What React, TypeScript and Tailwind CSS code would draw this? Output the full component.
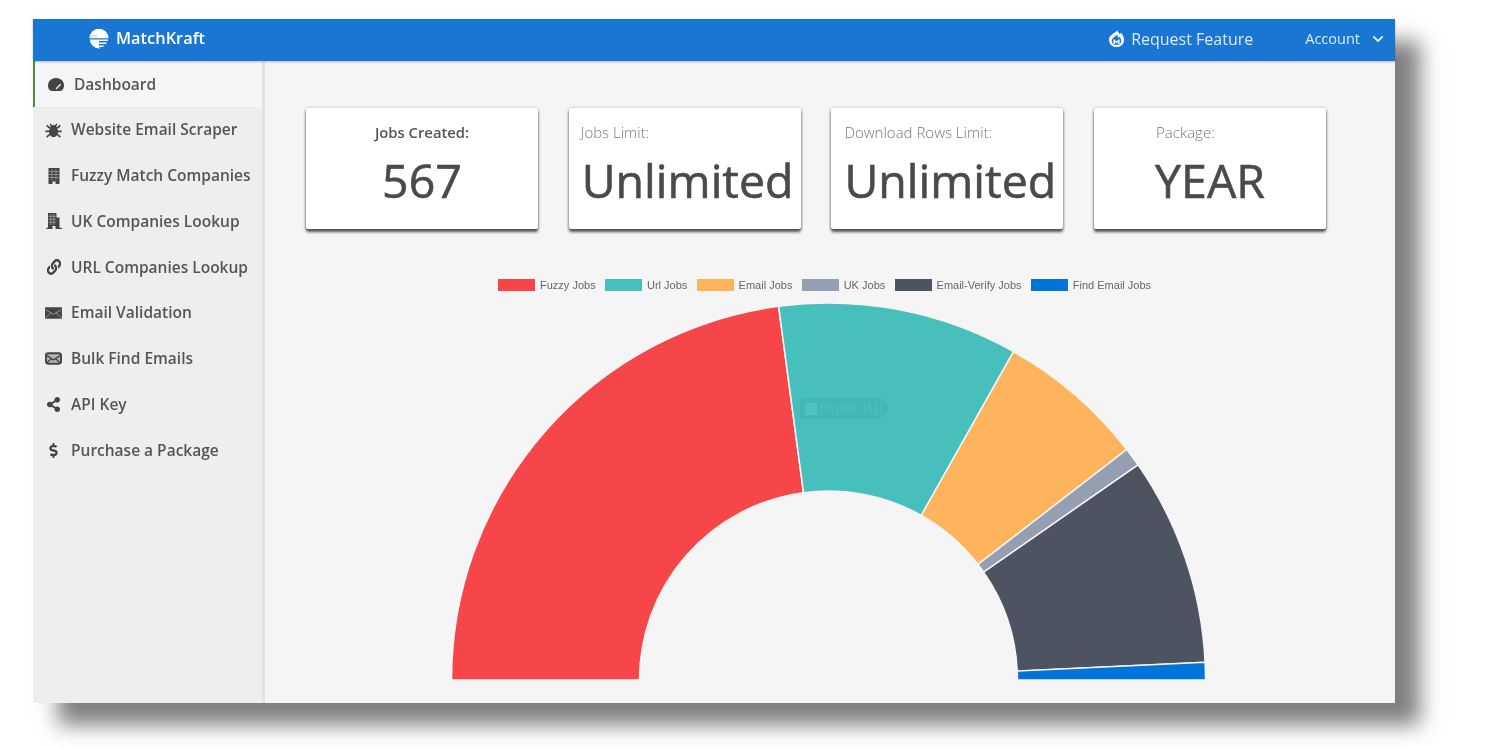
import { FaChevronDown, FaDollarSign, FaLink, FaShareAlt } from "react-icons/fa";

const DashIcon = ({ className }: { className?: string }) => (
  <svg viewBox="0 0 16 13" className={className}>
    <path d="M8 0C3.6 0 0 3.2 0 7.4c0 2.2.9 4 2.3 5.1.4.3.8.5 1.3.5h8.8c.5 0 .9-.2 1.300-.5C14.900 11.400 16 9.600 16 7.400 16 3.200 12.400 0 8 0Z" fill="currentColor" />
    <path d="M8.500 10.500 12.300 6.500" stroke="#eee" strokeWidth="1.400" strokeLinecap="round" />
  </svg>
);

const BugIcon = ({ className }: { className?: string }) => (
  <svg viewBox="0 0 18 16" className={className}>
    <ellipse cx="9" cy="9.500" rx="4.800" ry="6.300" fill="currentColor" />
    <path d="M5.500 1.500 7 4M12.500 1.500 11 4" stroke="currentColor" strokeWidth="1.500" />
    <path d="M5 6 1.800 3M13 6l3.200-3M4.500 9.500H.3M13.500 9.500h4.200M5 12.500 1.800 15.500M13 12.500l3.200 3" stroke="currentColor" strokeWidth="1.800" />
    <path d="M6 4.200h6" stroke="currentColor" strokeWidth="2.500" />
  </svg>
);

const TowerIcon = ({ className }: { className?: string }) => (
  <svg viewBox="0 0 12 16" className={className}>
    <path d="M0.500 0H11.500V16H7.500V13.500H4.500V16H0.500Z" fill="currentColor" />
    <path d="M4 1V12.500M8 1V12.500M1 3.500H11M1 6.500H11M1 9.500H11" stroke="#9a9a9a" strokeWidth="0.800" />
  </svg>
);

const HotelIcon = ({ className }: { className?: string }) => (
  <svg viewBox="0 0 16 16" className={className}>
    <path d="M2 0H10.500V4.500H13.500V14.800H15.800V16H9.500V13H6.500V16H0.200V14.800H2Z" fill="currentColor" />
    <path d="M4.800 1V12M7.800 1V12M2.500 3.300H10M2.500 6.300H10M2.500 9.300H10" stroke="#a5a5a5" strokeWidth="0.800" />
  </svg>
);

const MailIcon = ({ className }: { className?: string }) => (
  <svg viewBox="0 0 18 12" className={className}>
    <rect width="18" height="12" rx="0.800" fill="currentColor" />
    <path d="M0.500 2.500 9 7.300 17.500 2.500M0.500 11 6.500 6M17.500 11 11.500 6" stroke="#aaa" strokeWidth="0.800" fill="none" />
  </svg>
);

const BulkIcon = ({ className }: { className?: string }) => (
  <svg viewBox="0 0 18 13" className={className}>
    <rect x="1" y="1" width="16" height="11" rx="2.500" fill="#b5b5b5" stroke="currentColor" strokeWidth="2" />
    <path d="M2 3.500 9 8 16 3.500M2 11 7 6.500M16 11 11 6.500" stroke="currentColor" strokeWidth="1.400" fill="none" />
  </svg>
);

const FlameIcon = ({ className }: { className?: string }) => (
  <svg viewBox="0 0 16 18" className={className}>
    <path d="M9 0c.2 2 1.600 3.200 2.600 4.600.5-.6.8-1.300.9-2C14.800 4.800 16 7.600 16 10.200 16 14.600 12.600 18 8 18s-8-3.400-8-7.800C0 6.300 3 5 5 3.400 6.600 2.300 8.400 1.600 9 0Z" fill="#fff" />
    <path d="M8.500 5C7.500 6.500 3 8 3 11.500 3 13.500 4 15 5.500 15.600H10.500C12 15 13 13.500 13 11.500 13 9.500 12 8 11 7 10.500 7.800 10 8.200 9.500 8.300 9.800 7 9.300 6 8.500 5Z" fill="#1976d2" />
    <path d="M5.500 14.800V11L8 13 10.500 11V14.800" stroke="#fff" strokeWidth="1.500" fill="none" />
  </svg>
);

const Logo = () => (
  <svg viewBox="0 0 20 20" className="w-[20px] h-[20px] mt-[2px]">
    <path d="M0.500 9.200A9.500 9.500 0 0 1 19.500 9.200Z" fill="#fff" />
    <path d="M0.800 10.500H10V19.500A9.500 9.500 0 0 1 0.800 10.500Z" fill="#fff" />
    <path d="M10 10.500H19.200A9.500 9.500 0 0 1 18.700 12H10ZM10 13.500H18A9.500 9.500 0 0 1 17 15H10ZM10 16.400H15.600A9.500 9.500 0 0 1 13.500 18H10ZM10 18.700H12A9.500 9.500 0 0 1 10 19.500Z" fill="#fff" />
    <path d="M1.500 6.300H8M1 8H8" stroke="#a9cdf0" strokeWidth="0.700" />
  </svg>
);

const menu = [
  { label: "Website Email Scraper", icon: <BugIcon className="w-[18px] h-[16px]" /> },
  { label: "Fuzzy Match Companies", icon: <TowerIcon className="w-[12px] h-[16px]" /> },
  { label: "UK Companies Lookup", icon: <HotelIcon className="w-[16px] h-[16px]" /> },
  { label: "URL Companies Lookup", icon: <FaLink className="w-[16px] h-[16px] scale-x-90" /> },
  { label: "Email Validation", icon: <MailIcon className="w-[17px] h-[12px]" /> },
  { label: "Bulk Find Emails", icon: <BulkIcon className="w-[17px] h-[13px]" /> },
  { label: "API Key", icon: <FaShareAlt className="w-[15px] h-[15px]" /> },
  { label: "Purchase a Package", icon: <FaDollarSign className="w-[15px] h-[15px]" /> },
];

const legend = [
  { label: "Fuzzy Jobs", swatch: "bg-[#f7464a]" },
  { label: "Url Jobs", swatch: "bg-[#46bfbd]" },
  { label: "Email Jobs", swatch: "bg-[#fdb45c]" },
  { label: "UK Jobs", swatch: "bg-[#949fb1]" },
  { label: "Email-Verify Jobs", swatch: "bg-[#4d5360]" },
  { label: "Find Email Jobs", swatch: "bg-[#0074d9]" },
];

// angles in degrees, measured from the +x axis
const slices = [
  { from: 180, to: 97.6, color: "#f7464a" },
  { from: 97.6, to: 60.6, color: "#46bfbd" },
  { from: 60.6, to: 37.7, color: "#fdb45c" },
  { from: 37.7, to: 34.8, color: "#949fb1" },
  { from: 34.8, to: 2.7, color: "#4d5360" },
  { from: 2.7, to: 0, color: "#0074d9" },
];

const cx = 378.5;
const cy = 377;
const outer = 377;
const inner = 189;

const point = (r: number, deg: number) => {
  const a = (deg * Math.PI) / 180;
  return `${(cx + r * Math.cos(a)).toFixed(2)} ${(cy - r * Math.sin(a)).toFixed(2)}`;
};

const arc = (from: number, to: number) =>
  `M${point(outer, from)} A${outer} ${outer} 0 0 1 ${point(outer, to)} L${point(inner, to)} A${inner} ${inner} 0 0 0 ${point(inner, from)} Z`;

const StatCard = ({ label, value, labelClass, valueClass }: { label: string; value: string; labelClass: string; valueClass: string }) => (
  <div className="w-[232px] h-[121px] bg-white rounded-[2px] shadow-[0_3px_3px_rgba(0,0,0,0.65),0_0_3px_rgba(0,0,0,0.25)] flex flex-col">
    <div className={`pt-[14px] leading-[21px] ${labelClass}`}>{label}</div>
    <div className={`mt-[7px] text-[46.5px] leading-[60px] [-webkit-text-stroke:0.6px_#4a4a4a] text-[#4a4a4a] whitespace-nowrap ${valueClass}`}>{value}</div>
  </div>
);

export default function App() {
  return (
    <div className="w-[1487px] h-[747px] bg-white pl-[33px] pt-[19px] overflow-hidden blur-[0.4px] [font-family:'Open_Sans',sans-serif]">
      <div className="w-[1362px] h-[684px] flex flex-col bg-[#f5f5f5] shadow-[25px_22px_20px_rgba(0,0,0,0.5)]">
        {/* Top bar */}
        <header className="h-[42px] shrink-0 bg-[#1976d2] flex items-center text-white shadow-[0_1px_2px_rgba(0,0,0,0.25)] relative">
          <div className="ml-[56px] flex items-center gap-[7px] pb-[3px]">
            <Logo />
            <span className="text-[16.4px] font-semibold pb-[1px]">MatchKraft</span>
          </div>
          <div className="ml-auto flex items-center text-white/85 pb-[3px]">
            <FlameIcon className="w-[15px] h-[17px]" />
            <span className="ml-[7px] text-[16px]">Request Feature</span>
            <span className="ml-[52px] text-[14.5px]">Account</span>
            <FaChevronDown className="ml-[12px] mr-[11px] w-[12px] h-[12px]" />
          </div>
        </header>

        <div className="flex-1 flex min-h-0">
          {/* Sidebar */}
          <aside className="w-[232px] shrink-0 bg-[#eeeeee] border-r-[3px] border-[#e2e2e2] text-[15.500px] font-semibold text-[#555]">
            <div className="h-[46px] bg-[#f5f5f5] border-l-2 border-[#4b8b3b] flex items-center pl-[13px] pt-[1px]">
              <DashIcon className="w-[16px] h-[13px] text-[#444] -mt-[1px]" />
              <span className="ml-[10px]">Dashboard</span>
            </div>
            {menu.map((item) => (
              <div key={item.label} className="h-[45.8px] flex items-center pl-[12px] text-[#555]">
                <span className="w-[17px] flex justify-center text-[#444]">{item.icon}</span>
                <span className="ml-[9px] whitespace-nowrap">{item.label}</span>
              </div>
            ))}
          </aside>

          {/* Main */}
          <main className="flex-1 flex flex-col pl-[41px] pt-[47px]">
            <div className="flex gap-[30.7px]">
              <StatCard label="Jobs Created:" value="567" labelClass="text-center text-[14.800px] font-semibold text-[#555]" valueClass="text-center" />
              <StatCard label="Jobs Limit:" value="Unlimited" labelClass="pl-[12px] text-[15px] font-light text-[#777]" valueClass="pl-[13px]" />
              <StatCard label="Download Rows Limit:" value="Unlimited" labelClass="pl-[13px] text-[15px] font-light text-[#777]" valueClass="pl-[13px]" />
              <StatCard label="Package:" value="YEAR" labelClass="pl-[62px] text-[15px] font-light text-[#777]" valueClass="text-center" />
            </div>

            <div className="mt-[49px] ml-[192px] h-[14px] flex items-center gap-[9.300px] whitespace-nowrap [font-family:'Liberation_Sans',sans-serif] text-[11px] text-[#666]">
              {legend.map((item) => (
                <div key={item.label} className="flex items-center">
                  <span className={`w-[37px] h-[12px] ${item.swatch}`} />
                  <span className="ml-[5px]">{item.label}</span>
                </div>
              ))}
            </div>

            <div className="relative mt-[11px] ml-[144px] w-[757px] h-[379px]">
              <svg viewBox="0 0 757 379" className="w-[757px] h-[379px]">
                {slices.map((s) => (
                  <path key={s.color} d={arc(s.from, s.to)} fill={s.color} stroke="#f5f5f5" strokeWidth="1.500" />
                ))}
              </svg>
              {/* faded chart tooltip left over from the hover state */}
              <div className="absolute left-[350px] top-[95px] h-[21px] flex items-center bg-[#42b8b6] rounded-l-[4px] pl-[5px] pr-[3px] text-[10px] text-[#4ec4c2]">
                <span className="w-[12px] h-[12px] bg-[#4ec4c2] mr-[3px]" />
                Url Jobs: 117
              </div>
              <div className="absolute left-[432px] top-[95px] border-y-[10.5px] border-y-transparent border-l-[8px] border-l-[#42b8b6]" />
            </div>
          </main>
        </div>
      </div>
    </div>
  );
}
